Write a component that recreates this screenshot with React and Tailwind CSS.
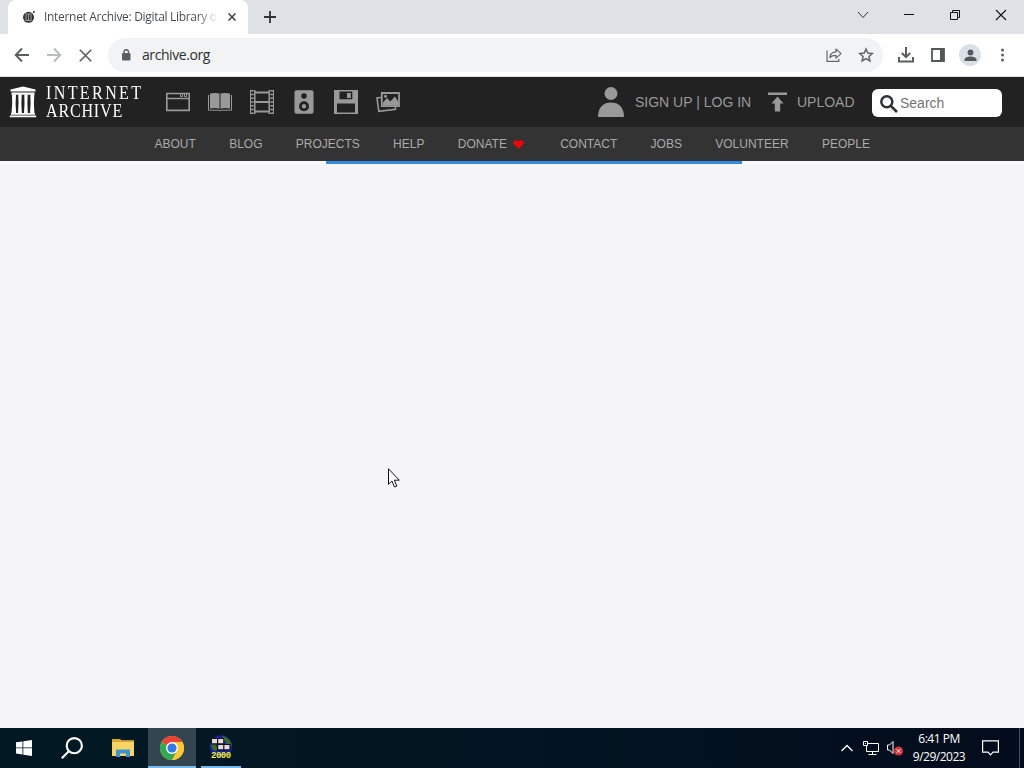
import React from 'react';

const navLinks = ['ABOUT', 'BLOG', 'PROJECTS', 'HELP', 'DONATE', 'CONTACT', 'JOBS', 'VOLUNTEER', 'PEOPLE'];

const TabStrip = () => (
  <div className="flex h-[34px] bg-[#dee1e6]">
    <div className="ml-2 flex w-60 items-center rounded-t-lg bg-white pl-[14px]">
      <svg className="mr-2 h-[14px] w-[14px] shrink-0" viewBox="0 0 14 14">
        <circle cx="6.5" cy="7.3" r="5.5" fill="#333" />
        <path d="M3.500 4h6M3.500 10.500h6M4 4.5v6M6.500 4.500v6M9 4.500v6" stroke="#aaa" strokeWidth="0.9" />
        <circle cx="11.800" cy="2" r="1" fill="#333" />
      </svg>
      <span className="w-[174px] whitespace-nowrap bg-gradient-to-r from-[#45474a] from-88% to-transparent bg-clip-text font-['Open_Sans',sans-serif] text-xs tracking-[-0.310px] text-transparent">
        Internet Archive: Digital Library o
      </span>
      <svg className="ml-[10px] h-2 w-2 shrink-0" viewBox="0 0 8 8" stroke="#3c4043" strokeWidth="1.5">
        <path d="M0.500 0.500l7 7M7.500 0.500l-7 7" />
      </svg>
    </div>
    <svg className="ml-4 mt-[11px] h-3 w-3" viewBox="0 0 12 12" stroke="#333" strokeWidth="1.8">
      <path d="M6 0v12M0 6h12" />
    </svg>
    <div className="ml-auto flex h-[29px] items-center">
      <svg className="mr-[34px] h-3 w-3" viewBox="0 0 12 12" fill="none" stroke="#333">
        <path d="M1 3l5 5.500L11 3" />
      </svg>
      <svg className="mr-[34px] h-3 w-3" viewBox="0 0 12 12" stroke="#111">
        <path d="M1 5.500h10" />
      </svg>
      <svg className="mr-[34px] h-3 w-3" viewBox="0 0 12 12" fill="none" stroke="#111">
        <path d="M1.500 3.500h7v7h-7zM3.500 3.500v-2h7v7h-2" />
      </svg>
      <svg className="mr-[17px] h-3 w-3" viewBox="0 0 12 12" stroke="#111" strokeWidth="1.1">
        <path d="M1 1l10 10M11 1L1 11" />
      </svg>
    </div>
  </div>
);

const Toolbar = () => (
  <div className="flex h-[43px] items-center border-b border-[#dfe3e4] bg-white">
    <svg className="ml-[14px] h-4 w-4" viewBox="0 0 16 16" fill="none" stroke="#5a5d61" strokeWidth="1.9">
      <path d="M15 8H2M8 1.500L1.700 8 8 14.500" />
    </svg>
    <svg className="ml-4 h-4 w-4" viewBox="0 0 16 16" fill="none" stroke="#b8babd" strokeWidth="1.900">
      <path d="M1 8h13M8 1.500L14.300 8 8 14.500" />
    </svg>
    <svg className="ml-[17px] h-[13px] w-[13px]" viewBox="0 0 13 13" stroke="#5a5d61" strokeWidth="1.6">
      <path d="M.8.8l11.400 11.400M12.200.8L.8 12.200" />
    </svg>
    <div className="ml-4 flex h-[34px] w-[775px] items-center rounded-full bg-[#f1f3f4] pl-[13px]">
      <svg className="mr-[11px] h-3 w-[10px]" viewBox="0 0 10 12">
        <rect x="1" y="4" width="8.500" height="7.500" rx="1" fill="#5a5d61" />
        <path d="M3 5V3a2.250 2.250 0 014.500 0v2" fill="none" stroke="#5a5d61" strokeWidth="1.3" />
      </svg>
      <span className="font-['Open_Sans',sans-serif] text-sm leading-none tracking-[-0.430px] text-[#2c2e31]">archive.org</span>
      <svg className="ml-auto mr-4 h-4 w-4" viewBox="0 0 16 16" fill="none" stroke="#66696d" strokeWidth="1.2">
        <path d="M1 3.500v10.800h11.800v-2.600" />
        <path d="M3.800 10.500c.4-4 3-5.500 6.200-5.600V2l5 4.600-5 4.500V8.300c-2.800 0-4.700.5-6.200 2.200z" strokeLinejoin="round" />
      </svg>
      <svg className="mr-[9px] h-4 w-4" viewBox="0 0 16 16" fill="none" stroke="#5f6368" strokeWidth="1.5">
        <path d="M8 2l1.800 4.100 4.500.4-3.400 3 1 4.400L8 11.600l-3.900 2.300 1-4.400-3.400-3 4.500-.4z" />
      </svg>
    </div>
    <svg className="ml-[15px] h-4 w-4" viewBox="0 0 16 16" fill="none" stroke="#5a5d61" strokeWidth="2">
      <path d="M8 0v10M3.800 6L8 10.200 12.200 6M1 10v4.500h14V10" />
    </svg>
    <svg className="ml-[17px] h-[14px] w-[14px]" viewBox="0 0 14 14">
      <path d="M1 1h12v12H1z" fill="none" stroke="#55585b" strokeWidth="1.800" />
      <path d="M9 1h4v12H9z" fill="#55585b" />
    </svg>
    <div className="ml-[14px] flex h-[22px] w-[22px] items-center justify-center rounded-full bg-[#dbe0e6]">
      <svg className="h-[13px] w-[13px]" viewBox="0 0 13 13" fill="#55595f">
        <circle cx="6.500" cy="3.500" r="2.900" />
        <path d="M.5 12v-1.500C.500 8.500 4 7.500 6.500 7.500s6 1 6 3V12z" />
      </svg>
    </div>
    <svg className="ml-[19px] h-[14px] w-[5px]" viewBox="0 0 5 14" fill="#5a5d61">
      <circle cx="2.500" cy="2" r="1.500" />
      <circle cx="2.500" cy="7" r="1.500" />
      <circle cx="2.500" cy="12" r="1.500" />
    </svg>
  </div>
);

const MediaIcons = () => (
  <div className="ml-[22px] flex gap-[18px]">
    {/* web */}
    <svg className="h-6 w-6" viewBox="0 0 24 24" fill="none" stroke="#999" strokeWidth="1.700">
      <path d="M.8 3.500h22.400v16.900H.8zM.8 8.500h22.400" />
      <path d="M14.500 4v2.500h2V4M18.500 4v2.500h2V4" strokeWidth="1" />
    </svg>
    {/* texts */}
    <svg className="h-6 w-6" viewBox="0 0 24 24" fill="#999">
      <path d="M2 3.500c4-.8 7-.8 9.500 0v15.300c-2.500-1-6-1-9.500-.3zM22 3.500c-4-.8-7-.8-9.500 0v15.300c2.500-1 6-1 9.500-.3z" />
      <path d="M.5 5v15.200h9.800l1.700.6 1.700-.6h9.800V5" fill="none" stroke="#999" strokeWidth="1" />
    </svg>
    {/* video */}
    <svg className="h-6 w-6" viewBox="0 0 24 24" fill="none" stroke="#999">
      <path d="M4.800 0v24M19.200 0v24" strokeWidth="1.500" />
      <path d="M5 2.500h14M5 12h14M5 21.500h14" strokeWidth="2" />
      <path d="M.5 0v24M23.500 0v24" strokeWidth="1" />
      <path d="M2.200 0v24M21.800 0v24" strokeWidth="3" strokeDasharray="1.400 2.360" />
    </svg>
    {/* audio */}
    <svg className="h-6 w-6" viewBox="0 0 24 24">
      <rect x="2.500" y=".3" width="19" height="23.400" rx="2" fill="#999" />
      <circle cx="12" cy="6" r="2.800" fill="#222" />
      <circle cx="12" cy="16.300" r="5" fill="#222" />
      <circle cx="12" cy="16.300" r="2.200" fill="#999" />
    </svg>
    {/* software */}
    <svg className="h-6 w-6" viewBox="0 0 24 24">
      <path d="M0 0h24v24H0z" fill="#999" />
      <path d="M5.500 1.500h12.800v7.700H5.500zM3 13.500h18v9H3z" fill="#222" />
      <path d="M13 3h3.800v5H13z" fill="#999" />
    </svg>
    {/* images */}
    <svg className="h-6 w-6" viewBox="0 0 24 24">
      <path d="M5 7.500L1 8l1.800 13.300 16.700-2.100-.3-2" fill="none" stroke="#999" strokeWidth="1.600" />
      <path d="M5.800 3h17.200v13.200H5.800z" fill="#222" stroke="#999" strokeWidth="1.800" />
      <path d="M7 15.500v-3l4-4.500 3.300 3.500L19 6.500l3 5v4z" fill="#999" />
      <circle cx="9.500" cy="6.300" r="1.500" fill="#999" />
    </svg>
  </div>
);

const ArchiveHeader = () => (
  <header className="font-['Liberation_Sans',Arial,sans-serif]">
    <div className="flex h-[50px] items-center bg-[#222]">
      <svg className="ml-[9px] h-8 w-7" viewBox="0 0 28 32" fill="#fff">
        <path d="M14 .5L26.500 3.600v2H1.500v-2zM2.500 6.400h23v2.400h-23zM2 27h24v1.800H2zM.8 29.400h26.400v1.800H.8z" />
        <path d="M3 8.500h4l-.4 9 .5 9.500H2.500l.7-9.500zM9.300 8.500h3.400l-.3 9 .4 9.500H9l.5-9.500zM15.300 8.500h3.400l-.3 9 .4 9.500H15l.5-9.500zM21.300 8.500h4l-.4 9 .5 9.500H21l.6-9.500z" />
      </svg>
      <div className="ml-[9px] flex w-[98px] flex-col items-start font-['Liberation_Serif',serif] text-[18.500px] leading-[18px] whitespace-nowrap text-white">
        <span className="origin-left scale-x-[0.870] tracking-[2.700px]">INTERNET</span>
        <span className="origin-left scale-x-[0.870] tracking-[0.900px]">ARCHIVE</span>
      </div>
      <MediaIcons />
      <div className="ml-auto flex items-center text-sm text-[#999]">
        <svg className="mr-[11px] h-[30px] w-[26px]" viewBox="0 0 26 30" fill="#999">
          <circle cx="13" cy="6.500" r="6.500" />
          <path d="M0 30C0 20 5.500 15.500 13 15.500S26 20 26 30z" />
        </svg>
        <span className="w-[117px] whitespace-nowrap">SIGN UP | LOG IN</span>
        <svg className="ml-4 mr-[10px] h-5 w-[19px]" viewBox="0 0 19 20" fill="#999">
          <path d="M0 .5h19v2.500H0zM9.500 4.500l6 7h-3.300V19.500H6.800v-8H3.500z" />
        </svg>
        <span className="w-[58px]">UPLOAD</span>
      </div>
      <div className="ml-[17px] mr-[22px] mt-[2px] flex h-7 w-[130px] items-center rounded-md bg-white">
        <svg className="ml-2 mt-[2px] h-[18px] w-[18px]" viewBox="0 0 18 18" fill="none" stroke="#2f3033">
          <circle cx="6.800" cy="6.800" r="5.500" strokeWidth="2.500" />
          <path d="M10.800 10.800l6.200 6.200" strokeWidth="2.600" />
        </svg>
        <span className="ml-[2px] text-sm text-[#757575]">Search</span>
      </div>
    </div>
    <nav className="flex h-[34px] items-center gap-[33.300px] bg-[#333] pl-[154.500px] text-xs text-[#aaa]">
      {navLinks.map((link) => (
        <span key={link} className="flex items-center">
          {link}
          {link === 'DONATE' && (
            <svg className="ml-[6px] mr-[3px] h-[9px] w-[11px]" viewBox="0 0 12 10" fill="#e8070b">
              <path d="M6 10L1 5C-.8 3 .5.3 3 .3c1.400 0 2.400.7 3 1.200C6.600 1 7.600.3 9 .3c2.500 0 3.800 2.700 2 4.700z" />
            </svg>
          )}
        </span>
      ))}
    </nav>
  </header>
);

const Taskbar = () => (
  <footer className="flex h-10 items-center bg-gradient-to-r from-[#021923] via-[#021522] to-[#030c1c] text-white">
    <svg className="ml-4 h-4 w-4" viewBox="0 0 16 16" fill="#fff">
      <path d="M0 2.300l6.500-.9v6.100H0zM7.300 1.300L16 0v7.500H7.300zM0 8.300h6.500v6.200L0 13.600zM7.300 8.300H16V16l-8.700-1.300z" />
    </svg>
    <svg className="ml-[29px] h-[22px] w-[22px]" viewBox="0 0 22 22" fill="none" stroke="#fff" strokeWidth="2.100">
      <circle cx="13.300" cy="8.700" r="7.600" />
      <path d="M7.800 14.200L.8 21.200" />
    </svg>
    <svg className="ml-[29px] h-5 w-[22px]" viewBox="0 0 22 20">
      <path d="M0 1h8l1 1.500h13V18H0z" fill="#f9d568" />
      <path d="M0 1h8l1 1.500H22V4H0z" fill="#dda52d" />
      <path d="M4 11.500h14V19h-4v-3.500H8V19H4z" fill="#3e94cf" />
    </svg>
    <div className="ml-[14px] flex h-10 w-12 items-center justify-center border-b-2 border-[#76b9ed] bg-[#33464f]">
      <svg className="mt-[2px] h-6 w-6" viewBox="0 0 24 24">
        <circle cx="12" cy="12" r="12" fill="#fcc934" />
        <path d="M12 12L1.600 6A12 12 0 0012 24l5.200-9z" fill="#34a853" />
        <path d="M12 12L1.600 6A12 12 0 0122.400 6z" fill="#ea4335" />
        <path d="M12 6h10.400A12 12 0 0112 24l5.200-9z" fill="#fcc934" />
        <circle cx="12" cy="12" r="6" fill="#fff" />
        <circle cx="12" cy="12" r="4.600" fill="#3478e5" />
      </svg>
    </div>
    <div className="ml-[5px] flex h-10 w-10 items-center justify-center border-b-2 border-[#76b9ed]">
      <svg className="mt-[2px] h-[26px] w-7" viewBox="0 0 28 26">
        <circle cx="14" cy="11.500" r="11.300" fill="#1620a0" />
        <path d="M15 1c4 0 9 4 9.500 9l-3 5-4-3 2-3zM4 8l4 1 3 5-3 2c-3-1-4-5-4-8z" fill="#3a6b20" />
        <path d="M4 3h13v6.500H4zM10 9h13.500v6.500H10z" fill="#111" />
        <path d="M5 4h5v4.300H5zM11.200 4h5v4.300h-5zM11.200 10h5v4.300h-5zM17.400 10h5v4.300h-5z" fill="#e5d9e4" />
        <text x="4" y="22.500" fontFamily="Liberation Mono, monospace" fontSize="9" fontWeight="bold" letterSpacing="-0.500" fill="#f4ed22">2000</text>
      </svg>
    </div>
    <svg className="ml-auto mr-[10px] h-3 w-3" viewBox="0 0 12 12" fill="none" stroke="#fff" strokeWidth="1.300">
      <path d="M.5 9L6 3.500 11.500 9" />
    </svg>
    <svg className="mr-2 h-[14px] w-4" viewBox="0 0 16 14" fill="none" stroke="#fff">
      <path d="M5 2.500h10.500v8H3.500V5M9.500 10.500v3M5.500 13.500h8" />
      <path d="M.5.500h4v4h-4zM2.500 2v1" />
    </svg>
    <svg className="mr-[8px] h-4 w-[17px]" viewBox="0 0 17 16">
      <path d="M.5 5h2L6 1.500v12L2.500 10h-2z" fill="none" stroke="#fff" />
      <circle cx="11.500" cy="11" r="4.600" fill="#d4343b" />
      <path d="M9.700 9.200l3.600 3.600M13.300 9.200l-3.600 3.600" stroke="#fff" />
    </svg>
    <div className="w-[54px] whitespace-nowrap text-center font-['Open_Sans',sans-serif] text-xs leading-[18px] tracking-[-0.500px]">
      <div>6:41 PM</div>
      <div>9/29/2023</div>
    </div>
    <svg className="ml-4 mr-5 h-4 w-[17px]" viewBox="0 0 17 16" fill="none" stroke="#fff" strokeWidth="1.200">
      <path d="M.6.8h15.800v11.400H11l-2.500 2.600L6 12.200H.6z" />
    </svg>
    <div className="mr-1 h-10 w-px bg-[#46525e]" />
  </footer>
);

export default function App() {
  return (
    <div className="relative flex h-screen w-screen flex-col overflow-hidden bg-[#f5f5f7]">
      <TabStrip />
      <Toolbar />
      <ArchiveHeader />
      <div className="h-[3px] bg-[#fbfafc]">
        <div className="ml-[326px] h-[3px] w-[416px] bg-[#318ae0]" />
      </div>
      <main className="flex-1" />
      <Taskbar />
      <svg className="absolute left-[388px] top-[468px] h-5 w-3" viewBox="0 0 12 20" fill="#fff" stroke="#111">
        <path d="M.5.800v15.500l3.400-3.300 2.600 6 2.300-1-2.500-5.800h5z" />
      </svg>
    </div>
  );
}
